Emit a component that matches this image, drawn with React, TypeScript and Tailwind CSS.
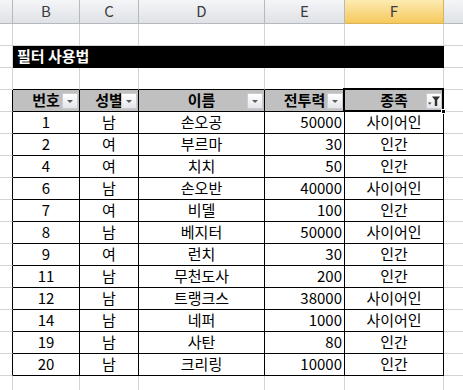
import { FC } from "react";

type Row = [number, string, string, number, string];

const rows: Row[] = [
	[1, "남", "손오공", 50000, "사이어인"],
	[2, "여", "부르마", 30, "인간"],
	[4, "여", "치치", 50, "인간"],
	[6, "남", "손오반", 40000, "사이어인"],
	[7, "여", "비델", 100, "인간"],
	[8, "남", "베지터", 50000, "사이어인"],
	[9, "여", "런치", 30, "인간"],
	[11, "남", "무천도사", 200, "인간"],
	[12, "남", "트랭크스", 38000, "사이어인"],
	[14, "남", "네퍼", 1000, "사이어인"],
	[19, "남", "사탄", 80, "인간"],
	[20, "남", "크리링", 10000, "인간"],
];

const widths = ["w-[67px]", "w-[59px]", "w-[126px]", "w-[80px]", "w-[99px]"];

const DropButton: FC<{ filtered?: boolean }> = ({ filtered }) => (
	<div className="absolute right-[1px] top-[3px] w-[16px] h-[16px] border border-[#c9ccd1] bg-gradient-to-b from-[#ffffff] to-[#e4e6ea] flex items-center justify-center">
		{filtered ? (
			<svg width="14" height="12" viewBox="0 0 14 12">
				<path d="M1 7.5 L4.5 7.5 L2.75 9.75 Z" fill="#4a4a4a" />
				<path d="M5 1.5 L13 1.5 L10.2 5 L10.2 11 L7.8 11 L7.8 5 Z" fill="#2f2f2f" />
			</svg>
		) : (
			<svg width="8" height="5" viewBox="0 0 8 5">
				<path d="M1 1 L7 1 L4 4 Z" fill="#5a5a5a" />
			</svg>
		)}
	</div>
);

const ColHeaders = () => (
	<div className="flex h-[24px] text-[15px] text-[#3c3c3c]">
		<div className="w-[13px] shrink-0 border-r border-b border-[#b6bac0] bg-gradient-to-b from-[#f4f5f7] to-[#dfe2e6]" />
		{["B", "C", "D", "E"].map((l, i) => (
			<div
				key={l}
				className={`${widths[i]} shrink-0 border-r border-b border-[#b6bac0] bg-gradient-to-b from-[#f4f5f7] to-[#dfe2e6] flex items-center justify-center`}>
				{l}
			</div>
		))}
		<div className="w-[99px] shrink-0 border-r border-b border-[#d9b25c] bg-gradient-to-b from-[#fcebb0] to-[#f6c95a] flex items-center justify-center">
			F
		</div>
		<div className="flex-1 border-b border-[#b6bac0] bg-gradient-to-b from-[#f4f5f7] to-[#dfe2e6]" />
	</div>
);

const BlankRow: FC<{ blackBottom?: boolean }> = ({ blackBottom }) => (
	<div className="flex h-[22px]">
		<div className="w-[13px] shrink-0 border-r border-b border-[#d4d4d4]" />
		{widths.map((w, i) => (
			<div
				key={i}
				className={`${w} shrink-0 border-r ${blackBottom ? "border-b-black" : "border-b-[#d4d4d4]"} border-r-[#d4d4d4] border-b`}
			/>
		))}
		<div className="flex-1 border-b border-[#d4d4d4]" />
	</div>
);

const TitleRow = () => (
	<div className="flex h-[22px]">
		<div className="w-[13px] shrink-0 border-r border-b border-[#d4d4d4]" />
		<div className="w-[431px] shrink-0 bg-black text-white font-bold text-[15px] flex items-center pl-[4px] border-r border-b border-black">
			필터 사용법
		</div>
		<div className="flex-1 border-b border-[#d4d4d4]" />
	</div>
);

const headers = ["번호", "성별", "이름", "전투력", "종족"];

const TableHeader = () => (
	<div className="flex h-[22px] text-[15px] font-bold text-black">
		<div className="w-[13px] shrink-0 border-r border-r-black border-b border-b-[#d4d4d4]" />
		{headers.map((h, i) => (
			<div
				key={h}
				className={`${widths[i]} shrink-0 relative bg-[#c0c0c0] border-r border-b border-black flex items-center justify-center`}>
				{h}
				<DropButton filtered={i === 4} />
				{i === 4 && (
					<>
						<div className="absolute -left-[2px] -top-[2px] -right-[1px] -bottom-[1px] border-2 border-black" />
						<div className="absolute -right-[3px] -bottom-[3px] w-[5px] h-[5px] bg-black border border-white" />
					</>
				)}
			</div>
		))}
		<div className="flex-1 border-b border-[#d4d4d4]" />
	</div>
);

const DataRow: FC<{ row: Row }> = ({ row }) => (
	<div className="flex h-[22px] text-[15px] text-black">
		<div className="w-[13px] shrink-0 border-r border-r-black border-b border-b-[#d4d4d4]" />
		{row.map((v, i) => (
			<div
				key={i}
				className={`${widths[i]} shrink-0 border-r border-b border-black flex items-center ${i === 3 ? "justify-end pr-[2px]" : "justify-center"}`}>
				{v}
			</div>
		))}
		<div className="flex-1 border-b border-[#d4d4d4]" />
	</div>
);

export default function App() {
	return (
		<div
			className="w-[463px] h-[390px] overflow-hidden bg-white select-none"
			style={{ fontFamily: '"Noto Sans CJK KR", "Noto Sans", sans-serif' }}>
			<ColHeaders />
			<BlankRow />
			<TitleRow />
			<BlankRow blackBottom />
			<TableHeader />
			{rows.map((r) => (
				<DataRow key={r[0]} row={r} />
			))}
			<BlankRow />
		</div>
	);
}
